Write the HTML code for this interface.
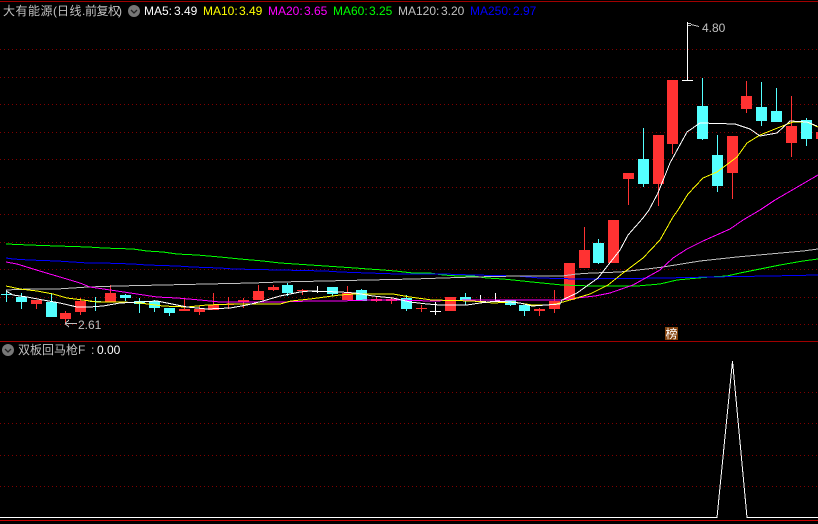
<!DOCTYPE html>
<html><head><meta charset="utf-8"><style>
html,body{margin:0;padding:0;background:#000;width:818px;height:524px;overflow:hidden}
#c{position:relative;width:818px;height:524px;background:#000;overflow:hidden;font-family:"Liberation Sans","WenQuanYi Zen Hei",sans-serif}
svg{position:absolute;left:0;top:0}
.t{position:absolute;white-space:pre;font-size:12px;line-height:14px;color:#c0c0c0}
.z{font-family:"WenQuanYi Zen Hei","Noto Sans CJK SC",sans-serif;font-size:12px}
</style></head><body><div id="c">
<svg width="818" height="524" viewBox="0 0 818 524">
<g stroke="#800000" stroke-width="1" stroke-dasharray="1 3" fill="none">
<path d="M0 49.5H818M0 77.5H818M0 104.5H818M0 132.5H818M0 159.5H818M0 187.5H818M0 214.5H818M0 242.5H818M0 269.5H818M0 297.5H818M0 324.5H818M0 392.5H818M0 423.5H818M0 455.5H818M0 486.5H818"/>
</g>
<g shape-rendering="crispEdges" fill="none">
<path stroke="#a00000" d="M0 1.5H818M0 341.5H818"/>
<path stroke="#c80000" d="M0 520.5H818"/>
<!-- red wicks -->
<path stroke="#ff3232" d="M36.5 300V309M65.5 311V323M80.5 298V315M110.5 285V302M184.5 299V311M199.5 306V315M213.5 293V310M228.5 297V309M243.5 298V308M258.5 285V300M273.5 285V291M302.5 289V295M347.5 286V300M376.5 296V302M391.5 297V304M421.5 305V312M539.5 308V316M554.5 290V313M584.5 227V268M628.5 173V205M658.5 135V206M672.5 80V154M732.5 136V199M746.5 81V113M791.5 96V157"/>
<!-- cyan wicks -->
<path stroke="#54ffff" d="M6.5 290V302M21.5 293V309M51.5 293V317M95.5 297V311M125.5 294V301M139.5 298V313M154.5 300V312M169.5 308V316M287.5 283V296M332.5 287V296M361.5 289V301M406.5 295V311M465.5 293V305M510.5 300V306M524.5 305V316M598.5 239V264M643.5 128V187M702.5 78V140M717.5 135V192M761.5 82V126M776.5 88V122M806.5 118V146"/>
<path stroke="#54ffff" d="M1 294.5H12M90 301.5H101"/>
<!-- white dojis -->
<path stroke="#fff" d="M317.5 286V293M312 291.5H323M435.5 302V315M430 311.5H441M480.5 295V302M475 301.5H486M495.5 293V302M490 301.5H501M687.5 22V80M682 80.5H693"/>
<!-- red bodies -->
<path fill="#ff3232" d="M31 300h11v4h-11zM60 313h11v6h-11zM75 301h11v11h-11zM105 293h11v9h-11zM179 309h11v2h-11zM194 309h11v3h-11zM208 305h11v5h-11zM223 304h11v1h-11zM238 300h11v2h-11zM253 291h11v9h-11zM268 287h11v3h-11zM297 290h11v1h-11zM342 293h11v7h-11zM371 299h11v2h-11zM386 299h11v2h-11zM416 308h11v1h-11zM445 297h11v14h-11zM534 309h11v2h-11zM549 301h11v8h-11zM564 263h11v37h-11zM579 250h11v18h-11zM608 220h11v43h-11zM623 173h11v6h-11zM653 135h11v49h-11zM667 80h11v64h-11zM727 136h11v37h-11zM741 96h11v13h-11zM786 126h11v17h-11zM816 132h2v7h-2z"/>
<!-- cyan bodies -->
<path fill="#54ffff" d="M16 297h11v5h-11zM46 302h11v15h-11zM120 295h11v3h-11zM134 301h11v3h-11zM149 301h11v7h-11zM164 308h11v5h-11zM282 285h11v8h-11zM327 287h11v7h-11zM356 290h11v11h-11zM401 298h11v11h-11zM460 297h11v3h-11zM505 300h11v5h-11zM519 305h11v6h-11zM593 243h11v20h-11zM638 159h11v25h-11zM697 106h11v33h-11zM712 155h11v31h-11zM756 107h11v14h-11zM771 111h11v11h-11zM801 120h11v19h-11z"/>
<!-- MA lines -->
<polyline stroke="#00ff00" points="6,244 29,245 57,246 88,247 103,248 133,249 147,251 163,252 177,254 197,255 220,257 240,259 263,261 280,263 295,264 310,265 325,266 340,267 355,268 368,269 383,270 395,271 413,273 430,273 443,275 458,276 473,276 487,278 503,279 513,280 532,282 552,284 562,285 592,286 637,286 660,284 677,280 698,278 710,277 727,276 740,273 760,269 780,265 803,261 818,259"/>
<polyline stroke="#0000ff" points="6,258 13,259 29,260 57,261 88,263 103,263 133,264 147,265 177,266 192,267 220,268 233,269 280,270 325,271 340,272 368,273 398,274 443,274 473,275 517,276 540,278 577,279 665,278 710,277 770,276 818,275"/>
<polyline stroke="#c0c0c0" points="6,290 29,289 57,289 88,287 118,286 163,285 207,284 252,283 280,282 325,281 368,280 414,279 443,278 473,277 517,276 562,276 577,274 592,273 620,272 647,269 663,267 700,261 737,257 770,254 803,251 818,249"/>
<polyline stroke="#ff00ff" points="6,262 17,264 30,268 43,272 60,277 80,283 90,287 117,291 137,294 157,297 177,298 200,300 220,302 240,302 280,302 310,301 340,301 370,300 400,300 430,301 473,300 532,300 562,300 577,298 595,296 610,293 633,285 660,270 673,258 687,249 703,241 730,229 743,220 760,210 775,200 818,175"/>
<polyline stroke="#ffff00" points="6,286 20,289 37,291 53,294 67,298 83,300 97,302 123,302 140,303 163,306 187,307 207,305 233,304 280,304 291,301 310,299 325,297 340,295 355,294 393,294 410,297 432,300 473,301 493,303 513,302 532,305 547,305 556,304 570,300 590,294 608,285 623,273 643,258 660,240 673,217 678,210 688,194 703,178 717,172 737,157 747,143 760,135 780,127 793,122 807,122 818,127"/>
<polyline stroke="#ffffff" points="6,291 13,295 27,297 43,300 60,303 77,307 90,307 103,306 120,303 140,302 157,301 167,303 187,307 207,309 230,308 247,305 263,301 280,296 290,294 300,292 310,291 340,292 355,293 373,296 393,298 410,302 427,304 440,305 467,305 480,303 497,301 520,303 532,306 560,304 562,300 577,293 598,278 620,250 628,235 643,218 649,210 658,193 670,163 687,132 700,123 735,124 750,129 760,136 777,133 790,121 807,122 817,126"/>
<!-- sub chart -->
<polyline stroke="#ffffff" stroke-width="1" points="0,517.5 717,517.5 732.5,361 747,517.5 818,517.5"/>
<!-- markers -->
<path stroke="#c0c0c0" d="M688 23.5H691M688 25.5H691M691 24.5L699 26.5M65 323.5H77M65 323.5L69 320M65 323.5L69 327"/>
</g>
<circle cx="134" cy="11" r="6" fill="#777"/>
<path d="M131 10l3 3 3-3" stroke="#222" stroke-width="1.3" fill="none"/>
<circle cx="8" cy="350" r="6" fill="#777"/>
<path d="M5 349l3 3 3-3" stroke="#222" stroke-width="1.3" fill="none"/>
<rect x="665" y="327" width="13" height="13" fill="#84430f"/>
</svg>
<span class="t z" style="left:3px;top:4px;letter-spacing:.5px">大有能源</span>
<span class="t" style="left:53px;top:4px">(</span>
<span class="t z" style="left:57px;top:4px;letter-spacing:.5px">日线</span>
<span class="t" style="left:82px;top:4px">.</span>
<span class="t z" style="left:85px;top:4px;letter-spacing:-.5px">前复权</span>
<span class="t" style="left:118px;top:4px">)</span>
<span class="t" style="left:144px;top:4px;color:#fff">MA5:</span><span class="t" style="left:174px;top:4px;color:#fff">3.49</span>
<span class="t" style="left:203px;top:4px;color:#ff0">MA10:</span><span class="t" style="left:239px;top:4px;color:#ff0">3.49</span>
<span class="t" style="left:268px;top:4px;color:#f0f">MA20:</span><span class="t" style="left:304px;top:4px;color:#f0f">3.65</span>
<span class="t" style="left:333px;top:4px;color:#0f0">MA60:</span><span class="t" style="left:369px;top:4px;color:#0f0">3.25</span>
<span class="t" style="left:398px;top:4px;color:#c0c0c0">MA120:</span><span class="t" style="left:441px;top:4px;color:#c0c0c0">3.20</span>
<span class="t" style="left:470px;top:4px;color:#0000ff">MA250:</span><span class="t" style="left:513px;top:4px;color:#0000ff">2.97</span>
<span class="t" style="left:702px;top:21px">4.80</span>
<span class="t" style="left:78px;top:318px">2.61</span>
<span class="t z" style="left:665px;top:327px;width:13px;text-align:center;color:#fff;font-size:12px;line-height:13px">榜</span>
<span class="t z" style="left:18px;top:343px">双板回马枪</span>
<span class="t" style="left:78px;top:343px">F</span>
<span class="t" style="left:91px;top:343px">:</span>
<span class="t" style="left:97px;top:343px;color:#fff">0.00</span>
</div></body></html>
